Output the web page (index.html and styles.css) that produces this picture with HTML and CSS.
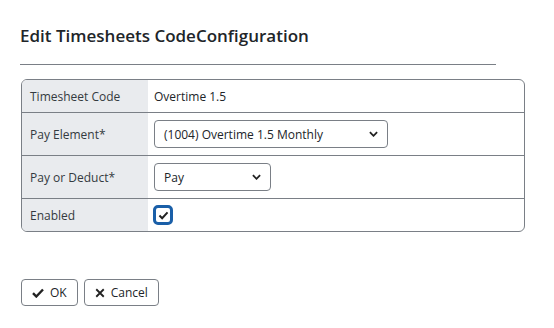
FILE: index.html
```html
<!DOCTYPE html>
<html lang="en">
<head>
    <meta charset="UTF-8">
    <meta name="viewport" content="width=device-width, initial-scale=1.0">
    <title>Edit Timesheets Code Configuration</title>
    <link rel="stylesheet" href="styles.css">
</head>
<body>
    <section class="dialog">
        <h1 class="dialog-title">Edit Timesheets CodeConfiguration</h1>
        <hr class="divider">

        <div class="form-table">
            <div class="row row-short">
                <div class="label">Timesheet Code</div>
                <div class="value">Overtime 1.5</div>
            </div>
            <div class="row">
                <div class="label">Pay Element*</div>
                <div class="value">
                    <div class="select select-wide">
                        <span>(1004) Overtime 1.5 Monthly</span>
                        <svg class="chevron" viewBox="0 0 10 6" width="9" height="6"><path d="M1 1l4 4 4-4" fill="none" stroke="#222" stroke-width="2"/></svg>
                    </div>
                </div>
            </div>
            <div class="row">
                <div class="label">Pay or Deduct*</div>
                <div class="value">
                    <div class="select select-narrow">
                        <span>Pay</span>
                        <svg class="chevron" viewBox="0 0 10 6" width="9" height="6"><path d="M1 1l4 4 4-4" fill="none" stroke="#222" stroke-width="2"/></svg>
                    </div>
                </div>
            </div>
            <div class="row row-short">
                <div class="label">Enabled</div>
                <div class="value">
                    <span class="checkbox">
                        <svg viewBox="0 0 12 10" width="11" height="9"><path d="M1.5 5l3 3 6-6.5" fill="none" stroke="#222" stroke-width="2.2"/></svg>
                    </span>
                </div>
            </div>
        </div>

        <div class="actions">
            <button class="btn">
                <svg viewBox="0 0 12 10" width="12" height="10"><path d="M1 5.2l3.3 3.3 6.7-7" fill="none" stroke="#222" stroke-width="2.4"/></svg>
                OK
            </button>
            <button class="btn">
                <svg viewBox="0 0 12 12" width="10" height="10"><path d="M1.5 1.5l9 9M10.5 1.5l-9 9" fill="none" stroke="#222" stroke-width="2.2"/></svg>
                Cancel
            </button>
        </div>
    </section>
</body>
</html>
```

FILE: styles.css
```css
body {
    margin: 0;
    background-color: white;
    color: #212529;
    font-family: "Open Sans", "Noto Sans", sans-serif;
    font-size: 12px;
}

.dialog {
    padding: 22px 29px 0 20px;
}

.dialog-title {
    margin: 0;
    font-size: 17px;
    font-weight: 600;
    line-height: 28px;
    color: #212529;
}

.divider {
    margin: 14px 0 14px 0;
    border: none;
    border-top: 1px solid #7a7f86;
    width: 476px;
}

.form-table {
    margin-left: 1px;
    width: 502px;
    border: 1px solid #7a7f86;
    border-radius: 6px;
    overflow: hidden;
}

.row {
    display: flex;
    height: 42px;
    border-top: 1px solid #7a7f86;
}

.row:first-child {
    border-top: none;
}

.row-short {
    height: 32px;
}

.label {
    width: 118px;
    flex-shrink: 0;
    background-color: #e9ebee;
    padding-left: 8px;
    display: flex;
    align-items: center;
    color: #343a40;
}

.value {
    display: flex;
    align-items: center;
    padding-left: 6px;
    color: #212529;
}

.select {
    border: 1px solid #7a7f86;
    border-radius: 4px;
    display: flex;
    align-items: center;
    justify-content: space-between;
    padding: 0 9px 0 9px;
    box-sizing: border-box;
    height: 28px;
}

.select-wide {
    width: 234px;
}

.select-narrow {
    width: 117px;
}

.checkbox {
    width: 20px;
    height: 20px;
    box-sizing: border-box;
    border: 3px solid #1a5fa8;
    border-radius: 5px;
    display: flex;
    align-items: center;
    justify-content: center;
    margin-left: -1px;
}

.actions {
    display: flex;
    gap: 6px;
    margin-top: 47px;
    margin-left: 1px;
}

.btn {
    height: 27px;
    min-width: 55px;
    padding: 0 10px;
    border: 1px solid #7a7f86;
    border-radius: 4px;
    background-color: white;
    font-family: "Open Sans", "Noto Sans", sans-serif;
    font-size: 12px;
    color: #212529;
    display: flex;
    align-items: center;
    justify-content: center;
    gap: 6px;
    cursor: pointer;
}

.btn svg {
    flex-shrink: 0;
}
```
